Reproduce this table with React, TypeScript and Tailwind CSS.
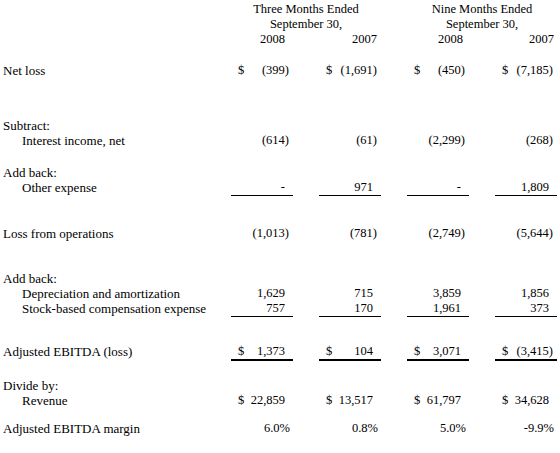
import React from "react";

type Cell = { d?: boolean; v: string };

function pad(v: string) {
  if (v.endsWith(")")) return "pr-[4px]";
  if (v.endsWith("%")) return "pr-[3px]";
  return "pr-[8px]";
}

function Row({
  label,
  indent,
  cells,
  rule,
  mt,
}: {
  label: string;
  indent?: boolean;
  cells?: Cell[];
  rule?: "single" | "double";
  mt: string;
}) {
  const border =
    rule === "single"
      ? "border-b border-black"
      : rule === "double"
      ? "border-b-2 border-black"
      : "";
  return (
    <div className={`flex leading-[15px] ${mt}`}>
      <div className={`w-[231px] shrink-0 whitespace-nowrap text-[13px] ${indent ? "pl-[22px]" : "pl-[3px]"}`}>
        {label}
      </div>
      {cells && (
        <div className="flex gap-[26px]">
          {cells.map((c, i) => (
            <div key={i} className={`w-[62px] flex ${border}`}>
              <span className="pl-[7px] w-[15px]">{c.d ? "$" : ""}</span>
              <span className={`flex-1 text-right whitespace-nowrap ${pad(c.v)}`}>{c.v}</span>
            </div>
          ))}
        </div>
      )}
    </div>
  );
}

export default function App() {
  return (
    <div
      className="w-[560px] h-[453px] bg-white text-black text-[12.5px] pt-[2px] overflow-hidden"
      style={{ fontFamily: '"Liberation Serif", "Times New Roman", serif' }}
    >
      <div className="flex leading-[15px]">
        <div className="w-[231px] shrink-0" />
        <div className="w-[150px] text-center">Three Months Ended</div>
        <div className="w-[26px]" />
        <div className="w-[150px] text-center">Nine Months Ended</div>
      </div>
      <div className="flex leading-[15px]">
        <div className="w-[231px] shrink-0" />
        <div className="w-[150px] text-center">September 30,</div>
        <div className="w-[26px]" />
        <div className="w-[150px] text-center">September 30,</div>
      </div>
      <div className="flex leading-[15px]">
        <div className="w-[231px] shrink-0" />
        <div className="flex gap-[26px]">
          <div className="w-[62px] text-right pr-[8px]">2008</div>
          <div className="w-[62px] text-right pr-[4px]">2007</div>
          <div className="w-[62px] text-right pr-[6px]">2008</div>
          <div className="w-[62px] text-right pr-[3px]">2007</div>
        </div>
      </div>

      <Row
        mt="mt-[16px]"
        label="Net loss"
        cells={[
          { d: true, v: "(399)" },
          { d: true, v: "(1,691)" },
          { d: true, v: "(450)" },
          { d: true, v: "(7,185)" },
        ]}
      />

      <Row mt="mt-[40px]" label="Subtract:" />
      <Row
        mt="mt-0"
        indent
        label="Interest income, net"
        cells={[{ v: "(614)" }, { v: "(61)" }, { v: "(2,299)" }, { v: "(268)" }]}
      />

      <Row mt="mt-[17px]" label="Add back:" />
      <Row
        mt="mt-0"
        indent
        label="Other expense"
        rule="single"
        cells={[{ v: "-" }, { v: "971" }, { v: "-" }, { v: "1,809" }]}
      />

      <Row
        mt="mt-[30px]"
        label="Loss from operations"
        cells={[{ v: "(1,013)" }, { v: "(781)" }, { v: "(2,749)" }, { v: "(5,644)" }]}
      />

      <Row mt="mt-[30px]" label="Add back:" />
      <Row
        mt="mt-0"
        indent
        label="Depreciation and amortization"
        cells={[{ v: "1,629" }, { v: "715" }, { v: "3,859" }, { v: "1,856" }]}
      />
      <Row
        mt="mt-0"
        indent
        label="Stock-based compensation expense"
        rule="single"
        cells={[{ v: "757" }, { v: "170" }, { v: "1,961" }, { v: "373" }]}
      />

      <Row
        mt="mt-[27px]"
        label="Adjusted EBITDA (loss)"
        rule="double"
        cells={[
          { d: true, v: "1,373" },
          { d: true, v: "104" },
          { d: true, v: "3,071" },
          { d: true, v: "(3,415)" },
        ]}
      />

      <Row mt="mt-[17px]" label="Divide by:" />
      <Row
        mt="mt-0"
        indent
        label="Revenue"
        cells={[
          { d: true, v: "22,859" },
          { d: true, v: "13,517" },
          { d: true, v: "61,797" },
          { d: true, v: "34,628" },
        ]}
      />

      <Row
        mt="mt-[13px]"
        label="Adjusted EBITDA margin"
        cells={[{ v: "6.0%" }, { v: "0.8%" }, { v: "5.0%" }, { v: "-9.9%" }]}
      />
    </div>
  );
}
